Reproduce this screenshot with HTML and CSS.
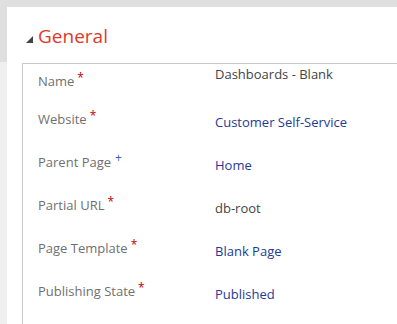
FILE: index.html
```html
<!DOCTYPE html>
<html>
<head>
<meta charset="utf-8">
<link rel="stylesheet" href="styles.css">
</head>
<body>
<div class="topbar"></div>
<div class="main">
  <div class="gutter"><div class="gutter-top"></div></div>
  <div class="panel">
    <div class="section-head">
      <svg class="tri" width="7" height="7" viewBox="0 0 7 7"><polygon points="7,0 7,7 0,7" fill="#444"/></svg>
      <span class="section-title">General</span>
    </div>
    <div class="section-box">
      <div class="row row-first">
        <div class="label">Name<span class="req">*</span></div>
        <div class="value">Dashboards - Blank</div>
      </div>
      <div class="row">
        <div class="label">Website<span class="req">*</span></div>
        <div class="value link">Customer Self-Service</div>
      </div>
      <div class="row">
        <div class="label">Parent Page<span class="rec">+</span></div>
        <div class="value link">Home</div>
      </div>
      <div class="row">
        <div class="label">Partial URL<span class="req">*</span></div>
        <div class="value">db-root</div>
      </div>
      <div class="row">
        <div class="label">Page Template<span class="req">*</span></div>
        <div class="value link">Blank Page</div>
      </div>
      <div class="row">
        <div class="label">Publishing State<span class="req">*</span></div>
        <div class="value link">Published</div>
      </div>
    </div>
  </div>
</div>
</body>
</html>
```
FILE: styles.css
```css
html, body {
  margin: 0;
  padding: 0;
}
body {
  width: 397px;
  height: 324px;
  overflow: hidden;
  background: #efefef;
  font-family: "Segoe UI", "Open Sans", "Noto Sans", sans-serif;
}
.topbar {
  height: 7px;
  background: #dfdfdf;
}
.main {
  display: flex;
  height: 317px;
}
.gutter {
  width: 7px;
  flex: none;
  background: #efefef;
}
.gutter-top {
  height: 55px;
  background: #dfdfdf;
}
.panel {
  flex: 1;
  background: #ffffff;
  overflow: hidden;
}
.section-head {
  display: flex;
  align-items: center;
  margin-top: 17px;
  padding-left: 19px;
  height: 24px;
}
.tri {
  margin-top: 6px;
  margin-right: 5px;
}
.section-title {
  font-size: 19px;
  line-height: 24px;
  color: #e0392a;
}
.section-box {
  margin-top: 15px;
  margin-left: 15px;
  border-top: 1px solid #c8c8c8;
  border-left: 1px solid #c8c8c8;
  height: 300px;
}
.row {
  display: grid;
  grid-template-columns: 177px 1fr;
  height: 43px;
  padding-left: 15px;
  font-size: 13px;
  line-height: 16px;
}
.row-first {
  height: 38px;
}
.label {
  padding-top: 9px;
  color: #707070;
  white-space: nowrap;
}
.value {
  padding-top: 12px;
  color: #444444;
  white-space: nowrap;
}
.row-first .value {
  padding-top: 2px;
}
.link {
  color: #1f3a93;
}
.req {
  color: #c00000;
  margin-left: 3px;
  font-size: 12px;
  position: relative;
  top: -4px;
}
.rec {
  color: #3b5fc0;
  margin-left: 4px;
  font-size: 12px;
  position: relative;
  top: -5px;
}
```
